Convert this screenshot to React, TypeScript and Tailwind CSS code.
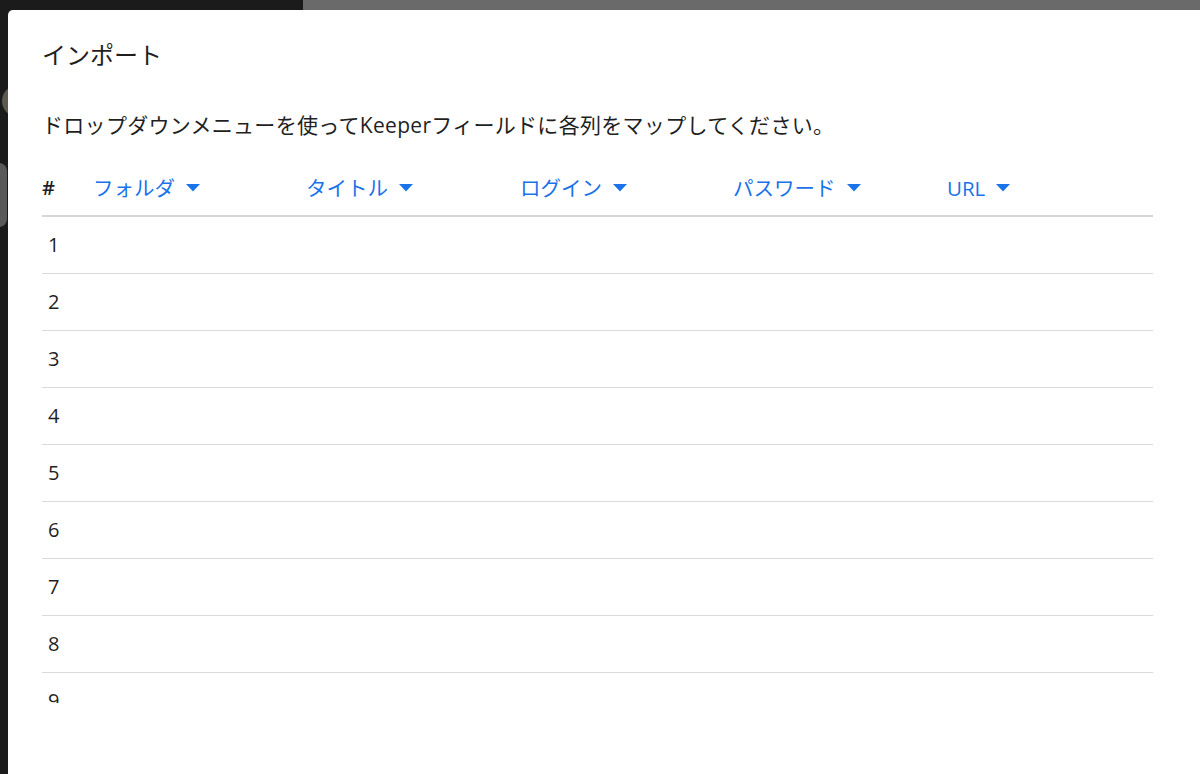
import React from "react";

const columns = ["フォルダ", "タイトル", "ログイン", "パスワード", "URL"];
const rows = [1, 2, 3, 4, 5, 6, 7, 8, 9];

function Caret() {
  return (
    <svg width="14" height="8" viewBox="0 0 14 8" className="shrink-0">
      <path d="M0 0h14L7 7.5z" fill="#1a73e8" />
    </svg>
  );
}

export default function App() {
  return (
    <div
      className="relative h-[774px] w-[1200px] overflow-hidden bg-[#1b1b1b] pl-[8px] pt-[10px]"
      style={{ fontFamily: '"Open Sans", "Noto Sans CJK JP", sans-serif' }}
    >
      {/* page behind the dialog */}
      <div className="absolute left-[303px] right-0 top-0 h-[10px] bg-[#6a6a6a]" />
      <div className="absolute left-[2px] top-[85px] h-[32px] w-[32px] rounded-full bg-[#5d594f]" />
      <div className="absolute left-[-20px] top-[163px] h-[64px] w-[27px] rounded-[8px] bg-[#595959]" />

      <div className="relative h-full rounded-tl-[5px] bg-white pl-[34px] pr-[47px] pt-[29px] text-[#1f1f1f]">
        <h2 className="text-[24px] leading-[32px]">インポート</h2>

        <p className="mt-[40px] text-[21px] leading-[28px] tracking-[0.3px]">
          ドロップダウンメニューを使ってKeeperフィールドに各列をマップしてください。
        </p>

        <div className="mt-[22px] grid h-[56px] grid-cols-[51px_213px_214px_213px_214px_1fr] items-center border-b-2 border-[#d6d6d6]">
          <span className="text-[20px] font-semibold">#</span>
          {columns.map((c) => (
            <button
              key={c}
              className="flex items-center gap-[11px] text-left text-[20.5px] text-[#1a73e8]"
            >
              {c}
              <Caret />
            </button>
          ))}
        </div>

        <div className="h-[486px] overflow-hidden">
          {rows.map((n) => (
            <div
              key={n}
              className="flex h-[57px] items-center border-b border-[#dadada] pl-[6px] text-[20px]"
            >
              {n}
            </div>
          ))}
        </div>
      </div>
    </div>
  );
}
